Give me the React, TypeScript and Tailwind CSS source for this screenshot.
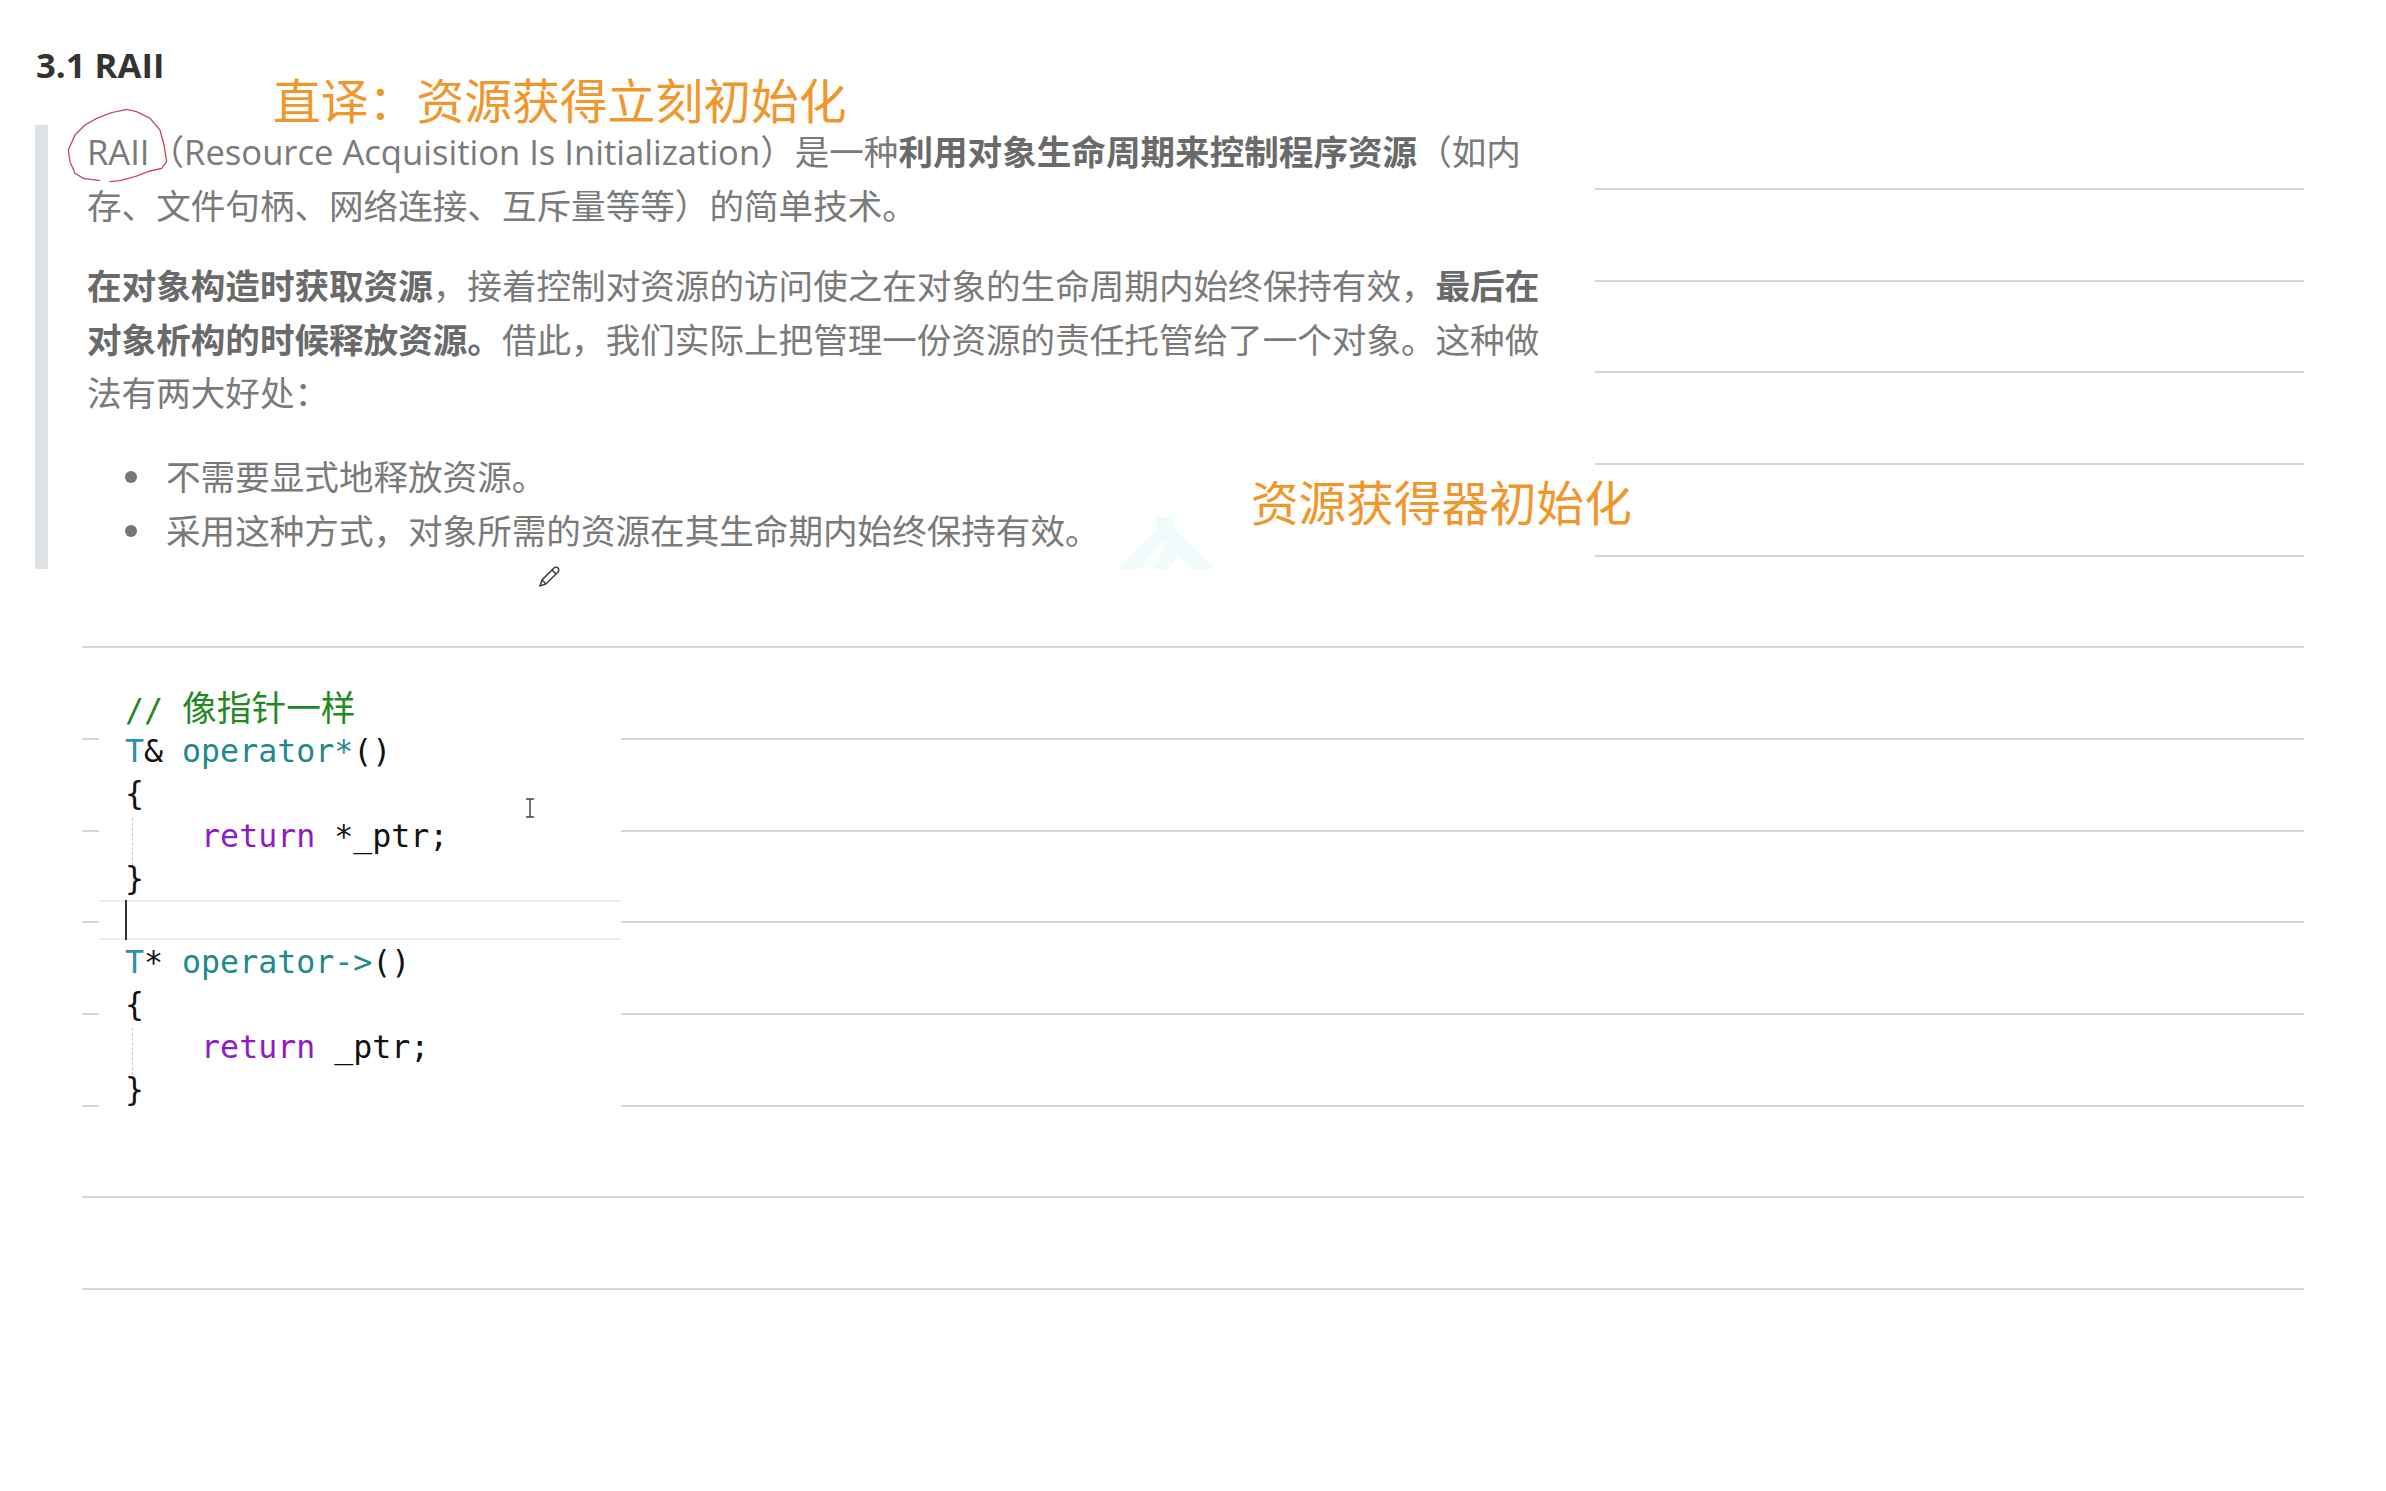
import React from "react";

const RULES = Array.from({ length: 13 }, (_, i) => i);

const body = "[font-family:'Open_Sans','Noto_Sans_CJK_SC',sans-serif]";
const mono = "[font-family:'DejaVu_Sans_Mono','Noto_Sans_CJK_SC',monospace]";
const note = "[font-family:'Noto_Sans_CJK_SC',sans-serif]";

const Code = ({ children }: { children?: React.ReactNode }) => (
  <div className="h-[42.2px] leading-[42.2px] whitespace-pre">{children}</div>
);

const Bullet = ({ children }: { children: React.ReactNode }) => (
  <li className="flex items-center h-[54px]">
    <span className="w-[12px] h-[12px] rounded-full bg-[#777] ml-[38px] mr-[29px]" />
    {children}
  </li>
);

export default function App() {
  return (
    <div className="relative h-[1491px] w-full overflow-hidden bg-white">
      {/* ruled notebook lines, everything else sits on white patches over them */}
      <div className="absolute left-[82px] right-[82px] top-[188px] flex flex-col gap-[89.68px]">
        {RULES.map((r) => (
          <div key={r} className="h-[2px] bg-[#d6d6d6]" />
        ))}
      </div>

      <div className={`relative w-[1595px] h-[600px] bg-white pt-[43px] pl-[36px] ${body}`}>
        <h3 className="text-[34.7px] leading-[44px] font-bold text-[#333]">3.1 RAII</h3>
        <div className="mt-[38px] -ml-px border-l-[13px] border-[#dfe2e5] pl-[39px] pb-[11px] w-[1540px] text-[34.6px] text-[#7a7a7a]">
          <p className="leading-[54px] whitespace-nowrap">
            RAII（Resource Acquisition Is Initialization）是一种
            <strong className="font-bold text-[#6a6a6a]">利用对象生命周期来控制程序资源</strong>
            （如内
            <br />
            存、文件句柄、网络连接、互斥量等等）的简单技术。
          </p>
          <p className="mt-[26px] leading-[53.5px] whitespace-nowrap">
            <strong className="font-bold text-[#6a6a6a]">在对象构造时获取资源</strong>
            ，接着控制对资源的访问使之在对象的生命周期内始终保持有效，
            <strong className="font-bold text-[#6a6a6a]">最后在</strong>
            <br />
            <strong className="font-bold text-[#6a6a6a]">对象析构的时候释放资源。</strong>
            借此，我们实际上把管理一份资源的责任托管给了一个对象。这种做
            <br />
            法有两大好处：
          </p>
          <ul className="mt-[30px]">
            <Bullet>不需要显式地释放资源。</Bullet>
            <Bullet>采用这种方式，对象所需的资源在其生命期内始终保持有效。</Bullet>
          </ul>
        </div>
      </div>

      <div className={`relative ml-[99px] mt-[87px] w-[522px] h-[425px] bg-white pt-[1px] pl-[26px] text-[31.6px] text-[#111] ${mono}`}>
        <Code>
          <span className="text-[#1f8a1f]">
            // <span className="text-[34.7px]">像指针一样</span>
          </span>
        </Code>
        <Code>
          <span className="text-[#2b91af]">T</span>&amp; <span className="text-[#1f8a8a]">operator*</span>()
        </Code>
        <Code>{"{"}</Code>
        <Code>
          {"    "}
          <span className="text-[#8f1cc0]">return</span> *_ptr;
        </Code>
        <Code>{"}"}</Code>
        <Code />
        <Code>
          <span className="text-[#2b91af]">T</span>* <span className="text-[#1f8a8a]">operator-&gt;</span>()
        </Code>
        <Code>{"{"}</Code>
        <Code>
          {"    "}
          <span className="text-[#8f1cc0]">return</span> _ptr;
        </Code>
        <Code>{"}"}</Code>

        {/* current line highlight + caret */}
        <div className="absolute left-0 right-0 top-[213px] h-[40px] border-y-2 border-[#eeeeee]" />
        <div className="absolute left-[26px] top-[213px] h-[40px] w-[2px] bg-[#333]" />
        {/* indent guides */}
        <div className="absolute left-[33px] top-[131px] h-[47px] border-l border-dashed border-[#ccc]" />
        <div className="absolute left-[33px] top-[341px] h-[47px] border-l border-dashed border-[#ccc]" />
        {/* i-beam cursor */}
        <svg className="absolute left-[426px] top-[111px]" width="10" height="20" viewBox="0 0 10 20" fill="none" stroke="#444" strokeWidth="1.5">
          <path d="M1 1h8M1 19h8M5 1v18" />
        </svg>
      </div>

      {/* handwritten annotations */}
      <div className={`absolute left-[273px] top-[73px] text-[47.8px] leading-[52px] text-[#f0962a] whitespace-nowrap ${note}`}>
        直译：资源获得立刻初始化
      </div>
      <div className={`absolute left-[1251px] top-[476px] text-[47.6px] leading-[50px] text-[#f0962a] whitespace-nowrap ${note}`}>
        资源获得器初始化
      </div>
      <svg className="absolute left-[40px] top-[90px]" width="200" height="110" viewBox="0 0 600 330" fill="none" stroke="#c84a5e" strokeWidth="4">
        <path d="M180 272L130 265L105 250L90 215L85 180L105 135L135 105L170 85L215 68L260 58L290 65L330 85L360 120L372 165L380 215L365 235L330 243L285 260L240 272L208 275" />
      </svg>
      {/* faint ghost mark next to the list */}
      <svg className="absolute left-[1118px] top-[517px]" width="96" height="52" viewBox="0 0 96 52" fill="#f0fcfc">
        <path d="M38 0H56V12L96 52H74L60 38L50 52H34L46 32V22L22 52H0L38 12Z" />
      </svg>
      {/* pencil cursor */}
      <svg className="absolute left-[537px] top-[565px]" width="24" height="24" viewBox="0 0 24 24" fill="white" stroke="#333" strokeWidth="1.4">
        <path d="M3 21L5 15L17 3C18 2 20 2 21 3C22 4 22 6 21 7L9 19ZM5 15L9 19M15 5L19 9" />
      </svg>
    </div>
  );
}
